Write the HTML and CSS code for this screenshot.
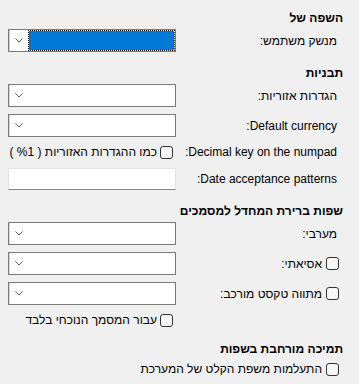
FILE: index.html
```html
<!DOCTYPE html>
<html lang="he" dir="rtl">
<head>
<meta charset="utf-8">
<link rel="stylesheet" href="styles.css">
</head>
<body>
<div class="page">
  <section class="sec first">
    <h2 class="head">השפה של</h2>
    <div class="row">
      <div class="lbl">מנשק משתמש:</div>
      <div class="combo sel"><span class="field"><span class="focus"></span></span><span class="btn"><svg width="8" height="5" viewBox="0 0 8 5"><path d="M0.5 0.5 L4 4 L7.5 0.5" fill="none" stroke="#606060" stroke-width="1"/></svg></span></div>
    </div>
  </section>

  <section class="sec">
    <h2 class="head">תבניות</h2>
    <div class="row">
      <div class="lbl">הגדרות אזוריות:</div>
      <div class="combo"><span class="field"></span><span class="btn"><svg width="8" height="5" viewBox="0 0 8 5"><path d="M0.5 0.5 L4 4 L7.5 0.5" fill="none" stroke="#606060" stroke-width="1"/></svg></span></div>
    </div>
    <div class="row">
      <div class="lbl">Default currency:</div>
      <div class="combo"><span class="field"></span><span class="btn"><svg width="8" height="5" viewBox="0 0 8 5"><path d="M0.5 0.5 L4 4 L7.5 0.5" fill="none" stroke="#606060" stroke-width="1"/></svg></span></div>
    </div>
    <div class="row short">
      <div class="lbl">Decimal key on the numpad:</div>
      <div class="ctl-check"><span class="box"></span><span class="ctext">כמו ההגדרות האזוריות ( <bdi dir="ltr">%1</bdi> )</span></div>
    </div>
    <div class="row">
      <div class="lbl">Date acceptance patterns:</div>
      <div class="entry"></div>
    </div>
  </section>

  <section class="sec">
    <h2 class="head">שפות ברירת המחדל למסמכים</h2>
    <div class="row">
      <div class="lbl">מערבי:</div>
      <div class="combo"><span class="field"></span><span class="btn"><svg width="8" height="5" viewBox="0 0 8 5"><path d="M0.5 0.5 L4 4 L7.5 0.5" fill="none" stroke="#606060" stroke-width="1"/></svg></span></div>
    </div>
    <div class="row">
      <div class="lbl check-lbl"><span class="box"></span><span class="ctext">אסיאתי:</span></div>
      <div class="combo"><span class="field"></span><span class="btn"><svg width="8" height="5" viewBox="0 0 8 5"><path d="M0.5 0.5 L4 4 L7.5 0.5" fill="none" stroke="#606060" stroke-width="1"/></svg></span></div>
    </div>
    <div class="row">
      <div class="lbl check-lbl"><span class="box"></span><span class="ctext">מתווה טקסט מורכב:</span></div>
      <div class="combo"><span class="field"></span><span class="btn"><svg width="8" height="5" viewBox="0 0 8 5"><path d="M0.5 0.5 L4 4 L7.5 0.5" fill="none" stroke="#606060" stroke-width="1"/></svg></span></div>
    </div>
    <div class="row short">
      <div class="lbl"></div>
      <div class="ctl-check"><span class="box"></span><span class="ctext">עבור המסמך הנוכחי בלבד</span></div>
    </div>
  </section>

  <section class="sec">
    <h2 class="head">תמיכה מורחבת בשפות</h2>
    <div class="line-check"><span class="box"></span><span class="ctext">התעלמות משפת הקלט של המערכת</span></div>
  </section>
</div>
</body>
</html>
```

FILE: styles.css
```css
html, body {
  margin: 0;
  padding: 0;
  background: #f0f0f0;
}
body {
  font-family: "Liberation Sans", "DejaVu Sans", sans-serif;
  font-size: 12px;
  color: #000;
  width: 359px;
  height: 384px;
  overflow: hidden;
}
.page {
  direction: rtl;
  padding: 10px 16px 0 8px;
}
.sec {
  margin-top: 13px;
}
.sec.first {
  margin-top: 0;
}
.head {
  margin: 0 0 3px 0;
  font-size: 12px;
  font-weight: bold;
  line-height: 16px;
}
.row {
  display: grid;
  grid-template-columns: 1fr 168px;
  align-items: center;
  margin-bottom: 7px;
  height: 23px;
}
.row.short {
  height: 16px;
}
.lbl {
  padding-right: 6px;
  line-height: 16px;
  white-space: nowrap;
}
.check-lbl {
  display: flex;
  align-items: center;
  gap: 4px;
  padding-right: 4px;
}
.combo {
  display: flex;
  height: 23px;
  box-sizing: border-box;
  border: 1px solid #7a7a7a;
  background: #fff;
}
.field {
  flex: 1;
  display: flex;
}
.sel .field {
  padding: 0 0 0 1px;
}
.focus {
  flex: 1;
  border: 1px dotted #000;
  background: #0078d7;
  background-clip: padding-box;
}
.btn {
  width: 17px;
  border-left: 1px solid #d9d9d9;
  display: flex;
  align-items: center;
  justify-content: center;
  background: #fff;
}
.sel .btn {
  border-left-color: #cfcfcf;
}
.entry {
  height: 22px;
  box-sizing: border-box;
  background: #fff;
  border: 1px solid #e3e3e3;
  border-bottom: 1px solid #868686;
}
.box {
  display: inline-block;
  width: 13px;
  height: 13px;
  box-sizing: border-box;
  border: 1px solid #333;
  border-radius: 3px;
  background: #f7f7f7;
  flex: none;
}
.ctl-check {
  display: flex;
  align-items: center;
  gap: 3px;
  padding-right: 3px;
  white-space: nowrap;
  line-height: 16px;
}
.line-check {
  display: flex;
  align-items: center;
  gap: 4px;
  padding-right: 4px;
  line-height: 16px;
  margin-top: 4px;
}
.ctext {
  white-space: nowrap;
}
```
